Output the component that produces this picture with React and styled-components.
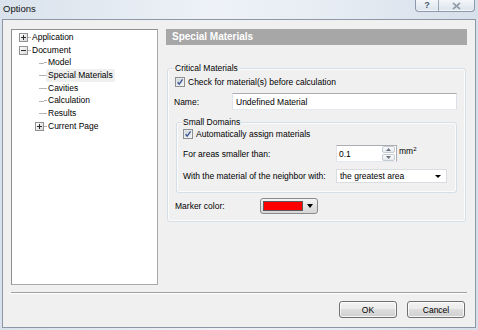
import React from 'react';
import styled, { createGlobalStyle } from 'styled-components';

const GlobalStyle = createGlobalStyle`
  html, body { margin: 0; padding: 0; background: #dde5ee; }
  body {
    font-family: "Liberation Sans", Arial, sans-serif;
    font-size: 8.5px;
    color: #000;
  }
  * { box-sizing: border-box; }
`;

const Window = styled.div`
  width: 478px;
  height: 330px;
  display: flex;
  flex-direction: column;
  background: linear-gradient(to right, #d9e2ec 0%, #eef2f7 45%, #e6ecf3 70%, #d6dfea 100%);
  overflow: hidden;
`;

const TitleBar = styled.div`
  height: 19px;
  flex: none;
  display: flex;
  justify-content: space-between;
  align-items: flex-start;
`;

const TitleText = styled.div`
  padding-left: 3px;
  line-height: 17px;
  font-size: 9.5px;
  color: #111;
`;

const CaptionButtons = styled.div`
  display: flex;
  margin-right: 3px;
  height: 12px;
  border: 1px solid #8c99aa;
  border-top: none;
  border-radius: 0 0 4px 4px;
  overflow: hidden;
  background: linear-gradient(#f3f6fa, #dbe3ec);
  box-shadow: inset 0 -1px 0 rgba(255,255,255,0.7);
`;

const CaptionButton = styled.div`
  width: ${p => p.$w}px;
  height: 100%;
  display: flex;
  align-items: center;
  justify-content: center;
  border-left: ${p => (p.$divider ? '1px solid #9aa6b5' : 'none')};
  color: #4a5a6e;
  font-size: 9px;
  font-weight: bold;
  line-height: 1;
`;

const Frame = styled.div`
  flex: 1;
  margin: 0 2px 2px 2px;
  border: 1px solid #8d98a6;
  background: #f0f0f0;
  padding: 9px 8px;
  display: flex;
  flex-direction: column;
`;

const Content = styled.div`
  display: flex;
  gap: 8px;
  height: 256px;
  flex: none;
`;

const Tree = styled.div`
  width: 147px;
  flex: none;
  background: #fff;
  border: 1px solid #a9a9a9;
  border-top-color: #8e8f8f;
  border-left-color: #8e8f8f;
  padding-top: 1px;
`;

const TreeRow = styled.div`
  display: flex;
  align-items: center;
  height: 12.7px;
  padding-left: ${p => (p.$level === 0 ? 7 : 23)}px;
  white-space: nowrap;
`;

const Gutter = styled.span`
  position: relative;
  width: 9px;
  height: 100%;
  flex: none;
  display: flex;
  align-items: center;
  ${p => p.$line && `
    &::after {
      content: '';
      position: absolute;
      left: 4px;
      right: 0;
      top: 50%;
      border-top: 1px solid #b4b4b4;
    }
  `}
`;

const Dash = styled.span`
  width: 3px;
  flex: none;
  border-top: 1px solid #b4b4b4;
`;

const TreeLabel = styled.span`
  padding: 0 1px;
  line-height: 11px;
  background: ${p => (p.$selected ? '#efefef' : 'transparent')};
  box-shadow: ${p => (p.$selected ? '0 0 0 0.5px #e2e2e2' : 'none')};
`;

const Pane = styled.div`
  flex: 1;
  display: flex;
  flex-direction: column;
`;

const PaneHeader = styled.div`
  height: 16px;
  background: #a7a7a7;
  color: #fff;
  font-weight: bold;
  font-size: 10px;
  line-height: 16px;
  padding-left: 6px;
`;

const GroupBox = styled.fieldset`
  margin: ${p => p.$margin || '0'};
  padding: ${p => p.$padding};
  border: 1px solid #d5dfe5;
  border-radius: 3px;
  box-shadow: inset 0 0 0 1px #fbfcfd;
  min-inline-size: 0;
  display: flex;
  flex-direction: column;
`;

const Legend = styled.legend`
  padding: 0 ${p => p.$pad || 0}px;
  line-height: 10px;
  font-size: 8.5px;
`;

const CheckRow = styled.div`
  display: flex;
  align-items: center;
  height: 12px;
  gap: 3px;
  margin-left: ${p => p.$indent || 0}px;
`;

const FormRow = styled.div`
  display: flex;
  align-items: center;
  height: ${p => p.$h}px;
  margin-top: ${p => p.$mt}px;
`;

const FieldLabel = styled.span`
  width: ${p => p.$w}px;
  flex: none;
  padding-left: ${p => p.$pl || 0}px;
`;

const TextInput = styled.div`
  flex: 1;
  height: 100%;
  background: #fff;
  border: 1px solid #abadb3;
  border-left-color: #e2e3ea;
  border-right-color: #dbdfe6;
  border-bottom-color: #e3e9ef;
  display: flex;
  align-items: center;
  padding-left: 3px;
`;

const SpinBox = styled.div`
  width: 61px;
  height: 100%;
  background: #fff;
  border: 1px solid #abadb3;
  border-left-color: #e2e3ea;
  border-bottom-color: #e3e9ef;
  display: flex;
  align-items: center;
  padding-left: 2px;
`;

const SpinValue = styled.span`
  flex: 1;
`;

const SpinButtons = styled.div`
  width: 14px;
  height: 100%;
  display: flex;
  flex-direction: column;
  gap: 1px;
  padding: 0 1px 0 0;
`;

const SpinButton = styled.div`
  flex: 1;
  border: 1px solid #c6cbd1;
  border-radius: 2px;
  background: linear-gradient(#fbfbfb, #e6e9ed);
  display: flex;
  align-items: center;
  justify-content: center;
`;

const Unit = styled.span`
  margin-left: 2px;
  align-self: flex-start;
  margin-top: 1px;
  sup { font-size: 6px; vertical-align: 3px; }
`;

const Combo = styled.div`
  width: 111px;
  height: 100%;
  background: #fff;
  border: 1px solid #d9dce0;
  display: flex;
  align-items: center;
  padding: 0 5px 0 3px;
  justify-content: space-between;
`;

const ColorButton = styled.div`
  width: 58px;
  height: 100%;
  border: 1px solid #8a8a8a;
  border-radius: 3px;
  background: linear-gradient(#f4f4f4, #e3e3e3 50%, #d6d6d6);
  display: flex;
  align-items: center;
  padding: 0 4px 0 2px;
  gap: 4px;
`;

const Swatch = styled.div`
  width: 41px;
  height: 10px;
  background: ${p => p.$color};
  border: 1px solid #5a5a5a;
`;

const Separator = styled.div`
  margin-top: 7px;
  border-top: 1px solid #a0a0a0;
  border-bottom: 1px solid #ffffff;
`;

const ButtonRow = styled.div`
  margin-top: 7px;
  display: flex;
  justify-content: flex-end;
  gap: 10px;
  padding-right: 2px;
`;

const DialogButton = styled.button`
  width: 58px;
  height: 17px;
  padding: 0;
  font-family: "Liberation Sans", Arial, sans-serif;
  font-size: 8.5px;
  color: #000;
  border: 1px solid #707070;
  border-radius: 3px;
  background: linear-gradient(#f2f2f2 0%, #ebebeb 45%, #dddddd 50%, #cfcfcf 100%);
  box-shadow: inset 0 0 0 1px rgba(255,255,255,0.8);
`;

const Expander = ({ open }) => (
  <svg width="9" height="9" viewBox="0 0 9 9">
    <defs>
      <linearGradient id="exg" x1="0" y1="0" x2="1" y2="1">
        <stop offset="0" stopColor="#ffffff" />
        <stop offset="1" stopColor="#d6d6d6" />
      </linearGradient>
    </defs>
    <rect x="0.5" y="0.5" width="8" height="8" fill="url(#exg)" stroke="#919191" />
    <line x1="2" y1="4.5" x2="7" y2="4.5" stroke="#2d2d2d" />
    {!open && <line x1="4.5" y1="2" x2="4.5" y2="7" stroke="#2d2d2d" />}
  </svg>
);

const CheckBox = () => (
  <svg width="10" height="10" viewBox="0 0 10 10" style={{ flex: 'none' }}>
    <defs>
      <linearGradient id="cbg" x1="0" y1="0" x2="1" y2="1">
        <stop offset="0" stopColor="#cdd3da" />
        <stop offset="1" stopColor="#f3f5f7" />
      </linearGradient>
    </defs>
    <rect x="0.5" y="0.5" width="9" height="9" fill="#f4f4f4" stroke="#8f8f8f" />
    <rect x="1.5" y="1.5" width="7" height="7" fill="url(#cbg)" />
    <path d="M2.6 5.2 L4.2 7.2 L7.6 2.4" fill="none" stroke="#3d5891" strokeWidth="1.4" />
  </svg>
);

const Triangle = ({ w = 5, h = 3, color = '#000' }) => (
  <svg width={w} height={h} viewBox={`0 0 ${w} ${h}`} style={{ flex: 'none' }}>
    <polygon points={`0,0 ${w},0 ${w / 2},${h}`} fill={color} />
  </svg>
);

const SpinArrow = ({ up }) => (
  <svg width="5" height="3" viewBox="0 0 5 3">
    <polygon points={up ? '0,3 5,3 2.5,0' : '0,0 5,0 2.5,3'} fill="#6b7380" />
  </svg>
);

const CloseGlyph = () => (
  <svg width="9" height="8" viewBox="0 0 9 8">
    <path d="M1 1 L8 7 M8 1 L1 7" stroke="#5b6b7e" strokeWidth="1.6" fill="none" />
    <path d="M1 1 L8 7 M8 1 L1 7" stroke="#eef2f6" strokeWidth="0.5" fill="none" />
  </svg>
);

const treeItems = [
  { label: 'Application', level: 0, expander: 'plus' },
  { label: 'Document', level: 0, expander: 'minus' },
  { label: 'Model', level: 1 },
  { label: 'Special Materials', level: 1, selected: true },
  { label: 'Cavities', level: 1 },
  { label: 'Calculation', level: 1 },
  { label: 'Results', level: 1 },
  { label: 'Current Page', level: 1, expander: 'plus' },
];

export default function App() {
  return (
    <>
      <GlobalStyle />
      <Window>
        <TitleBar>
          <TitleText>Options</TitleText>
          <CaptionButtons>
            <CaptionButton $w={22}>?</CaptionButton>
            <CaptionButton $w={36} $divider><CloseGlyph /></CaptionButton>
          </CaptionButtons>
        </TitleBar>
        <Frame>
          <Content>
            <Tree>
              {treeItems.map(item => (
                <TreeRow key={item.label} $level={item.level}>
                  <Gutter $line={!item.expander}>
                    {item.expander && <Expander open={item.expander === 'minus'} />}
                  </Gutter>
                  <Dash />
                  <TreeLabel $selected={item.selected}>{item.label}</TreeLabel>
                </TreeRow>
              ))}
            </Tree>
            <Pane>
              <PaneHeader>Special Materials</PaneHeader>
              <GroupBox $margin="18px 1px 0 1px" $padding="3px 8px 7px 6px">
                <Legend $pad={1}>Critical Materials</Legend>
                <CheckRow $indent={1}>
                  <CheckBox />
                  <span>Check for material(s) before calculation</span>
                </CheckRow>
                <FormRow $h={17} $mt={5}>
                  <FieldLabel $w={58}>Name:</FieldLabel>
                  <TextInput>Undefined Material</TextInput>
                </FormRow>
                <GroupBox $margin="7px 0 0 2px" $padding="1px 8px 9px 6px">
                  <Legend>Small Domains</Legend>
                  <CheckRow>
                    <CheckBox />
                    <span>Automatically assign materials</span>
                  </CheckRow>
                  <FormRow $h={17} $mt={5}>
                    <FieldLabel $w={153}>For areas smaller than:</FieldLabel>
                    <SpinBox>
                      <SpinValue>0.1</SpinValue>
                      <SpinButtons>
                        <SpinButton><SpinArrow up /></SpinButton>
                        <SpinButton><SpinArrow /></SpinButton>
                      </SpinButtons>
                    </SpinBox>
                    <Unit>mm<sup>2</sup></Unit>
                  </FormRow>
                  <FormRow $h={14} $mt={7}>
                    <FieldLabel $w={153}>With the material of the neighbor with:</FieldLabel>
                    <Combo>
                      <span>the greatest area</span>
                      <Triangle w={6} h={3} />
                    </Combo>
                  </FormRow>
                </GroupBox>
                <FormRow $h={16} $mt={5}>
                  <FieldLabel $w={86} $pl={1}>Marker color:</FieldLabel>
                  <ColorButton>
                    <Swatch $color="#ff0000" />
                    <Triangle w={6} h={4} />
                  </ColorButton>
                </FormRow>
              </GroupBox>
            </Pane>
          </Content>
          <Separator />
          <ButtonRow>
            <DialogButton>OK</DialogButton>
            <DialogButton>Cancel</DialogButton>
          </ButtonRow>
        </Frame>
      </Window>
    </>
  );
}
